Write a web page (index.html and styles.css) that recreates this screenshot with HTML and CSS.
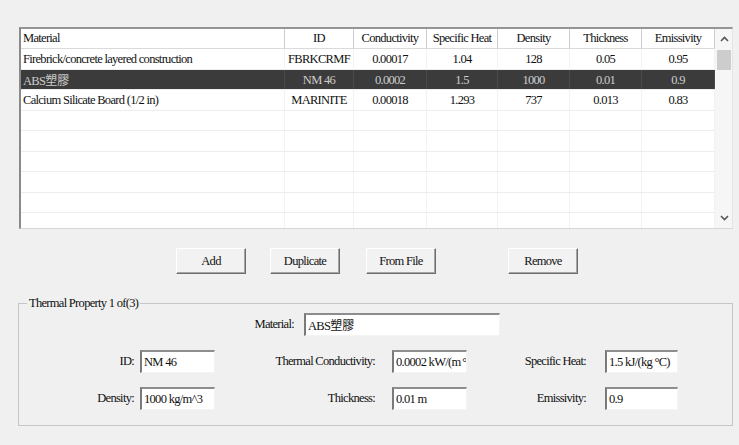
FILE: index.html
```html
<!DOCTYPE html>
<html lang="en">
<head>
<meta charset="utf-8">
<title>Thermal Properties</title>
<link rel="stylesheet" href="styles.css">
</head>
<body>
<div class="dialog">
  <div class="list">
    <div class="table">
      <div class="row head">
        <div class="c c-name">Material</div>
        <div class="c">ID</div>
        <div class="c">Conductivity</div>
        <div class="c">Specific Heat</div>
        <div class="c">Density</div>
        <div class="c">Thickness</div>
        <div class="c">Emissivity</div>
      </div>
      <div class="row">
        <div class="c c-name">Firebrick/concrete layered construction</div>
        <div class="c">FBRKCRMF</div>
        <div class="c">0.00017</div>
        <div class="c">1.04</div>
        <div class="c">128</div>
        <div class="c">0.05</div>
        <div class="c">0.95</div>
      </div>
      <div class="row sel">
        <div class="c c-name">ABS<span class="cjk">塑膠</span></div>
        <div class="c">NM 46</div>
        <div class="c">0.0002</div>
        <div class="c">1.5</div>
        <div class="c">1000</div>
        <div class="c">0.01</div>
        <div class="c">0.9</div>
      </div>
      <div class="row">
        <div class="c c-name">Calcium Silicate Board (1/2 in)</div>
        <div class="c">MARINITE</div>
        <div class="c">0.00018</div>
        <div class="c">1.293</div>
        <div class="c">737</div>
        <div class="c">0.013</div>
        <div class="c">0.83</div>
      </div>
      <div class="row"><div class="c c-name"></div><div class="c"></div><div class="c"></div><div class="c"></div><div class="c"></div><div class="c"></div><div class="c"></div></div>
      <div class="row"><div class="c c-name"></div><div class="c"></div><div class="c"></div><div class="c"></div><div class="c"></div><div class="c"></div><div class="c"></div></div>
      <div class="row"><div class="c c-name"></div><div class="c"></div><div class="c"></div><div class="c"></div><div class="c"></div><div class="c"></div><div class="c"></div></div>
      <div class="row"><div class="c c-name"></div><div class="c"></div><div class="c"></div><div class="c"></div><div class="c"></div><div class="c"></div><div class="c"></div></div>
      <div class="row"><div class="c c-name"></div><div class="c"></div><div class="c"></div><div class="c"></div><div class="c"></div><div class="c"></div><div class="c"></div></div>
      <div class="row"><div class="c c-name"></div><div class="c"></div><div class="c"></div><div class="c"></div><div class="c"></div><div class="c"></div><div class="c"></div></div>
    </div>
    <div class="vscroll">
      <div class="sb-btn">
        <svg width="9" height="6" viewBox="0 0 9 6"><polyline points="1,5 4.5,1.5 8,5" fill="none" stroke="#555" stroke-width="1.6"/></svg>
      </div>
      <div class="sb-track"><div class="sb-thumb"></div></div>
      <div class="sb-btn">
        <svg width="9" height="6" viewBox="0 0 9 6"><polyline points="1,1 4.5,4.5 8,1" fill="none" stroke="#555" stroke-width="1.6"/></svg>
      </div>
    </div>
  </div>

  <div class="actions">
    <button class="btn">Add</button>
    <button class="btn btn-dup">Duplicate</button>
    <button class="btn btn-file">From File</button>
    <button class="btn btn-remove">Remove</button>
  </div>

  <fieldset class="group">
    <legend>Thermal Property 1 of(3)</legend>
    <div class="frow">
      <span class="lbl lbl-material">Material:</span>
      <span class="field field-wide">ABS<span class="cjk">塑膠</span></span>
    </div>
    <div class="frow">
      <span class="lbl lbl-1">ID:</span>
      <span class="field">NM 46</span>
      <span class="lbl lbl-2">Thermal Conductivity:</span>
      <span class="field">0.0002 kW/(m&#8201;°C)</span>
      <span class="lbl lbl-3">Specific Heat:</span>
      <span class="field field-narrow">1.5 kJ/(kg °C)</span>
    </div>
    <div class="frow">
      <span class="lbl lbl-1">Density:</span>
      <span class="field">1000 kg/m^3</span>
      <span class="lbl lbl-2">Thickness:</span>
      <span class="field">0.01 m</span>
      <span class="lbl lbl-3">Emissivity:</span>
      <span class="field field-narrow">0.9</span>
    </div>
  </fieldset>
</div>
</body>
</html>
```

FILE: styles.css
```css
* { box-sizing: border-box; }

html, body { margin: 0; padding: 0; }

body {
  width: 739px;
  height: 445px;
  overflow: hidden;
  background: #f0f0f0;
  color: #111;
  font-family: "Liberation Serif", "Times New Roman", serif;
  font-size: 12.5px;
  letter-spacing: -0.7px;
}

.cjk {
  font-family: "Noto Sans CJK TC", "Noto Sans CJK SC", sans-serif;
  font-size: 12px;
  letter-spacing: 0;
}

button, legend { font-family: inherit; }

.dialog { padding-top: 27px; }

/* ---- material list ---- */
.list {
  display: flex;
  margin-left: 19px;
  width: 714px;
  height: 202px;
  overflow: hidden;
  background: #fff;
  border-top: 2px solid #959595;
  border-left: 2px solid #8a8a8a;
  border-right: 1px solid #e4e4e4;
  border-bottom: 1px solid #d6d6d6;
}

.table { width: 694px; flex: none; }

.row {
  display: grid;
  grid-template-columns: 264px 69px 73px 71px 72px 72px 73px;
  height: 20.5px;
  line-height: 20px;
  border-bottom: 1px solid #ededed;
}

.c {
  padding: 0 2px;
  text-align: center;
  white-space: nowrap;
  overflow: hidden;
  border-right: 1px solid #f2f2f2;
}
.c-name { text-align: left; }

.row.head {
  height: 20px;
  line-height: 19px;
  border-bottom: 1px solid #dadada;
}
.row.head .c { border-right-color: #cdcdcd; }

.row.sel {
  background: #3b3b3b;
  color: #cdcdcd;
}
.row.sel .c { border-right-color: #4a4a4a; }

/* ---- vertical scrollbar ---- */
.vscroll {
  flex: 1;
  display: flex;
  flex-direction: column;
  background: #f6f6f6;
}
.sb-btn {
  height: 20px;
  flex: none;
  display: flex;
  align-items: center;
  justify-content: center;
  padding-left: 1px;
}
.sb-track { flex: 1; padding: 1px 1px 0 2px; }
.sb-thumb { height: 20px; background: #cdcdcd; }

/* ---- command buttons ---- */
.actions {
  display: flex;
  margin-top: 19px;
  padding-left: 176px;
}
.btn {
  width: 70px;
  height: 26px;
  padding: 0;
  font: inherit;
  color: inherit;
  letter-spacing: inherit;
  background: #f2f2f2;
  border: 1px solid;
  border-color: #ffffff #6e6e6e #6e6e6e #ffffff;
  box-shadow: inset -1px -1px 0 #a5a5a5;
}
.btn-dup { margin-left: 24px; }
.btn-file { margin-left: 26px; }
.btn-remove { margin-left: 72px; }

/* ---- property group ---- */
.group {
  margin: 22px 0 0 18px;
  width: 715px;
  height: 130px;
  padding: 3px 0 0 0;
  border: 1px solid #c6c6c6;
}
.group legend {
  margin-left: 8px;
  padding: 0 2px;
  line-height: 14px;
}

.frow {
  display: flex;
  align-items: center;
  height: 23px;
}
.frow + .frow { margin-top: 14px; }

.lbl {
  flex: none;
  text-align: right;
  white-space: nowrap;
}
.lbl-material { width: 275px; margin-right: 10px; }
.lbl-1 { width: 115px; margin-right: 6px; }
.lbl-2 { width: 160px; margin-right: 17px; }
.lbl-3 { width: 119px; margin-right: 19px; }

.field {
  flex: none;
  width: 75px;
  height: 23px;
  line-height: 20px;
  padding: 0 0 0 2px;
  white-space: nowrap;
  overflow: hidden;
  text-overflow: clip;
  background: #fff;
  border-top: 2px solid #8d8d8d;
  border-left: 2px solid #7a7a7a;
  border-right: 1px solid #f4f4f4;
  border-bottom: 1px solid #f4f4f4;
}
.field-wide { width: 196px; }
.field-narrow { width: 73px; }
```
